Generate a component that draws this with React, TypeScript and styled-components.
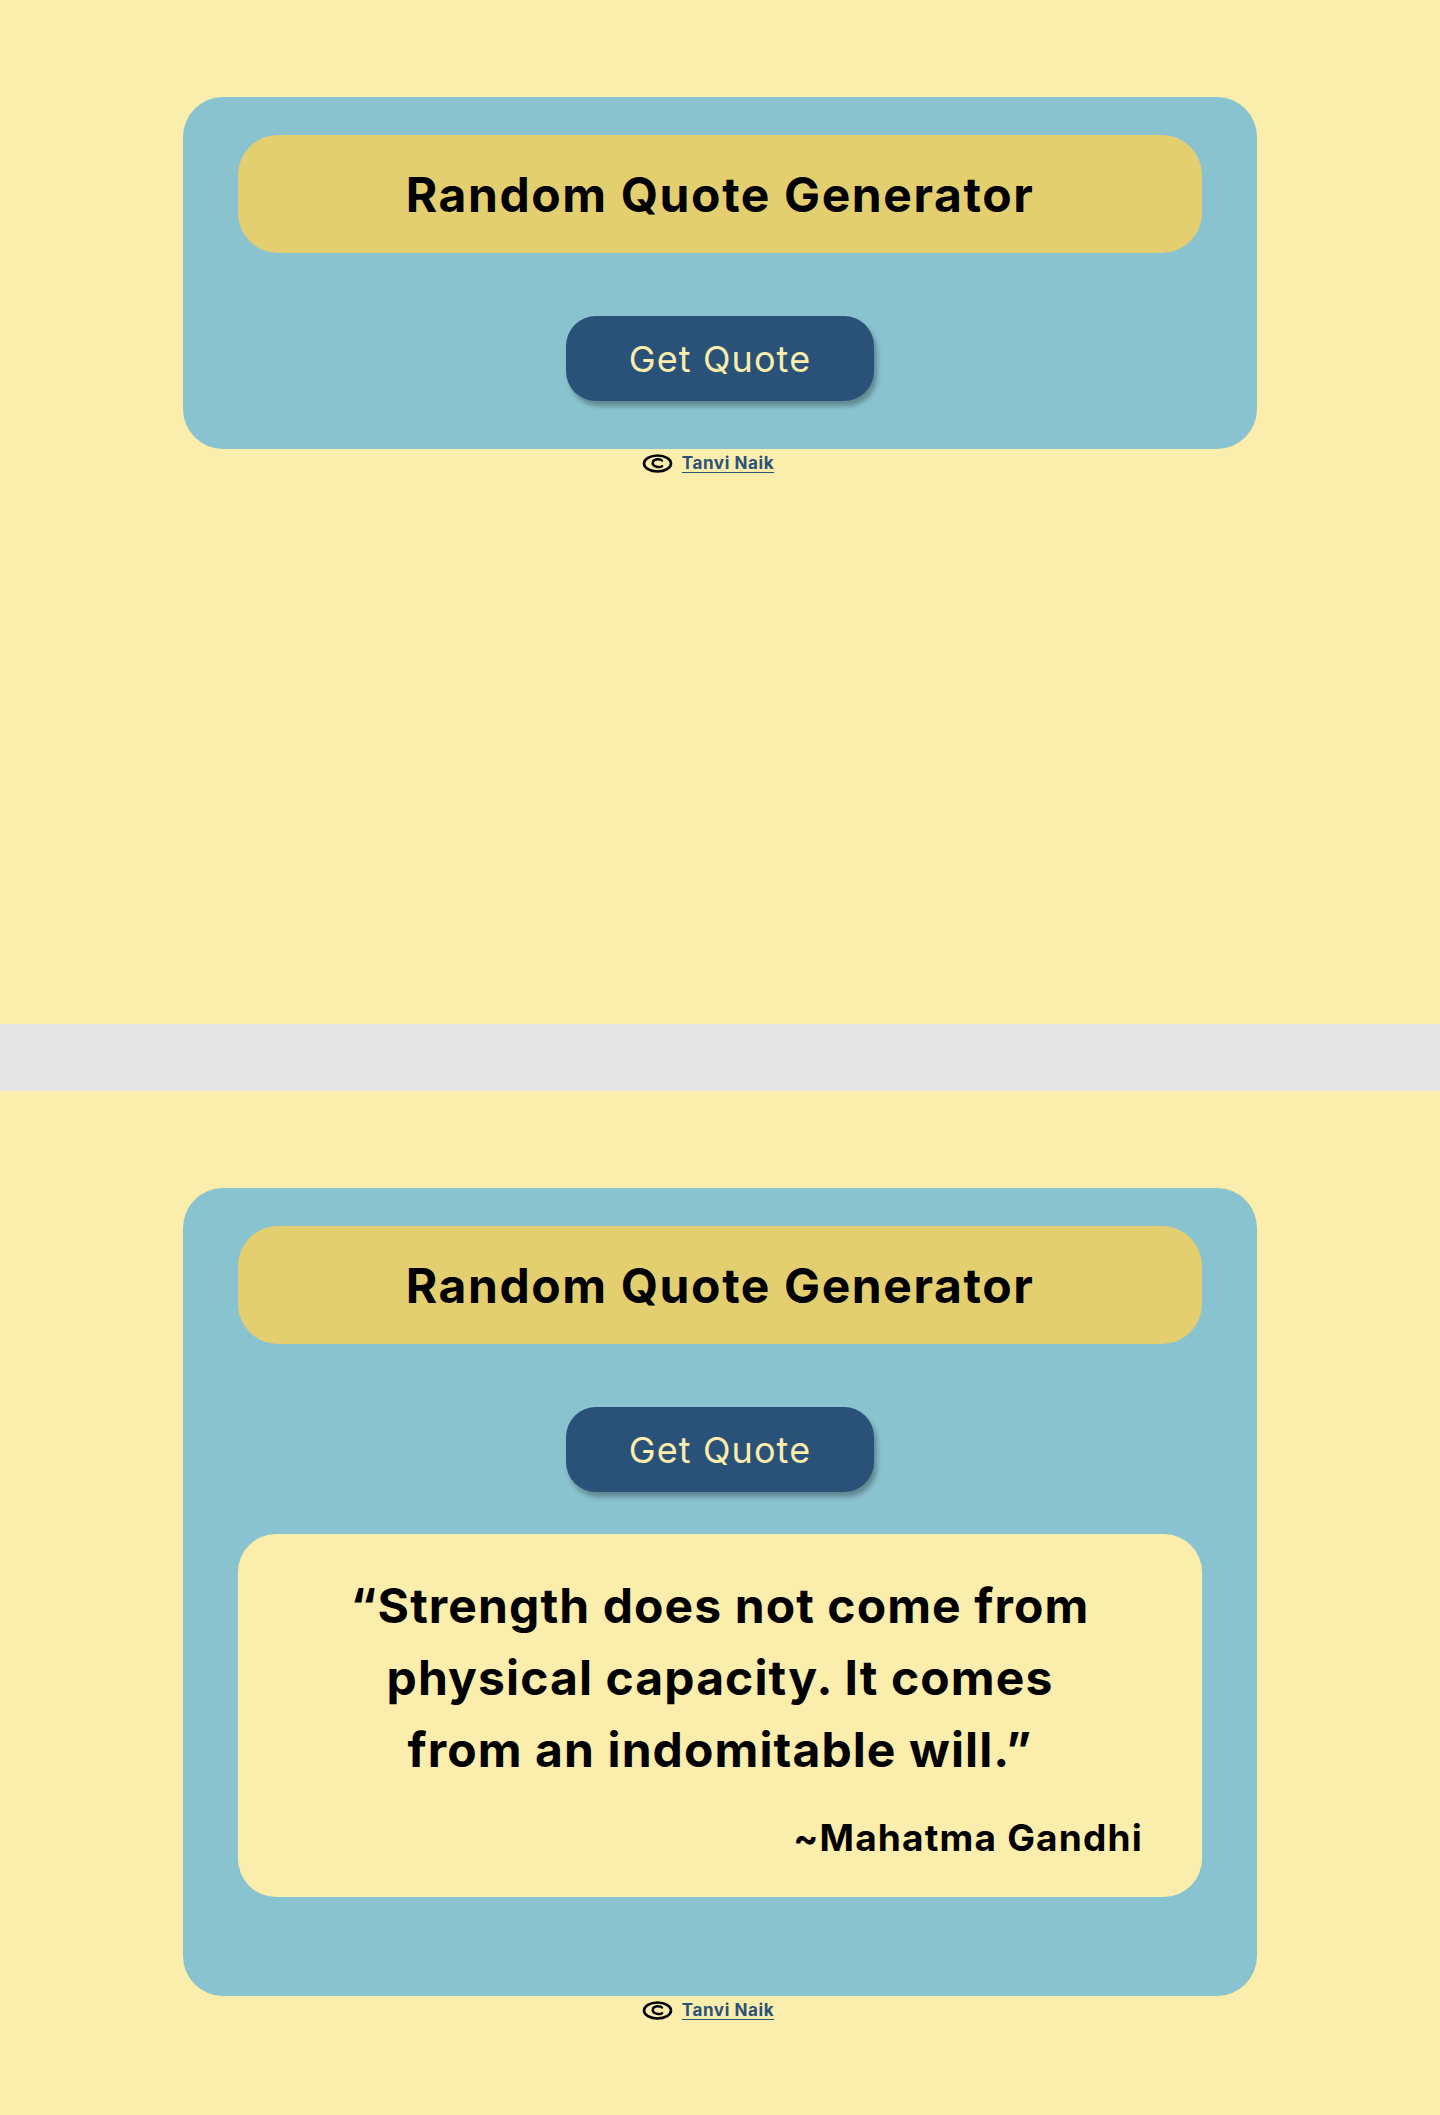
import React from "react";
import styled, { createGlobalStyle } from "styled-components";

const GlobalStyle = createGlobalStyle`
  html, body {
    margin: 0;
    padding: 0;
    background: #fbedab;
  }
  body {
    font-family: "Inter", "Open Sans", sans-serif;
  }
  * { box-sizing: border-box; }
`;

const Page = styled.div`
  display: flex;
  flex-direction: column;
  width: 1440px;
`;

const Screen = styled.section`
  height: 1024px;
  background: #fbedab;
  padding-top: 97px;
  display: flex;
  flex-direction: column;
  align-items: center;
`;

const Divider = styled.div`
  height: 67px;
  background: #e5e5e5;
`;

const Card = styled.main`
  width: 1074px;
  background: #8ac3d0;
  border-radius: 40px;
  padding: 38px 55px 48px;
  display: flex;
  flex-direction: column;
  align-items: center;
`;

const TitleBar = styled.header`
  width: 100%;
  height: 118px;
  background: #e4cf70;
  border-radius: 40px;
  display: flex;
  align-items: center;
  justify-content: center;
`;

const Title = styled.h1`
  margin: 0;
  font-family: "Inter", sans-serif;
  font-weight: 700;
  font-size: 48px;
  letter-spacing: 1.6px;
  color: #000;
`;

const QuoteButton = styled.button`
  margin-top: 63px;
  width: 308px;
  height: 85px;
  border: none;
  border-radius: 30px;
  background: #2a5279;
  color: #fbedab;
  font-family: "Inter", sans-serif;
  font-weight: 400;
  font-size: 36px;
  letter-spacing: 1.1px;
  box-shadow: 3px 5px 5px rgba(0, 0, 0, 0.3);
  cursor: pointer;
`;

const QuoteBox = styled.article`
  margin-top: 42px;
  margin-bottom: 51px;
  width: 100%;
  height: 363px;
  background: #fbedab;
  border-radius: 38px;
  padding: 36px 59px 0;
  display: flex;
  flex-direction: column;
`;

const QuoteText = styled.p`
  margin: 0 auto;
  max-width: 770px;
  text-align: center;
  font-family: "Inter", sans-serif;
  font-weight: 700;
  font-size: 48px;
  line-height: 72px;
  letter-spacing: 1.1px;
  color: #000;
`;

const Author = styled.p`
  margin: 25px 0 0;
  text-align: right;
  font-family: "Inter", sans-serif;
  font-weight: 700;
  font-size: 37px;
  line-height: 54px;
  letter-spacing: 1.2px;
  color: #000;
`;

const Footer = styled.footer`
  margin-top: 2px;
  padding-right: 24px;
  display: flex;
  align-items: center;
  gap: 9px;
  font-family: "Inter", sans-serif;
  font-size: 17px;
  line-height: 24px;
`;

const AuthorLink = styled.a`
  color: #2a5279;
  font-weight: 700;
  letter-spacing: 0.6px;
  text-decoration: underline;
  text-underline-offset: 3px;
`;

const CopyIcon = () => (
  <svg width="31" height="19" viewBox="0 0 31 19" aria-hidden="true">
    <ellipse cx="15.5" cy="9.5" rx="13.5" ry="8" fill="none" stroke="#000" strokeWidth="2.6" />
    <path d="M20 6.6 C18.5 4.6 11.5 4.4 10.7 8.6 C10.1 12.6 18.1 14.2 20.1 12.2" fill="none" stroke="#000" strokeWidth="2.4" strokeLinecap="round" />
  </svg>
);

const Credit = () => (
  <Footer>
    <CopyIcon />
    <AuthorLink href="#">Tanvi Naik</AuthorLink>
  </Footer>
);

const QuoteCard: React.FC<{ showQuote?: boolean }> = ({ showQuote }) => (
  <>
    <Card>
      <TitleBar>
        <Title>Random Quote Generator</Title>
      </TitleBar>
      <QuoteButton>Get Quote</QuoteButton>
      {showQuote && (
        <QuoteBox>
          <QuoteText>
            “Strength does not come from physical capacity. It comes from an indomitable will.”
          </QuoteText>
          <Author>~Mahatma Gandhi</Author>
        </QuoteBox>
      )}
    </Card>
    <Credit />
  </>
);

export default function App() {
  return (
    <Page>
      <GlobalStyle />
      <Screen>
        <QuoteCard />
      </Screen>
      <Divider />
      <Screen>
        <QuoteCard showQuote />
      </Screen>
    </Page>
  );
}
